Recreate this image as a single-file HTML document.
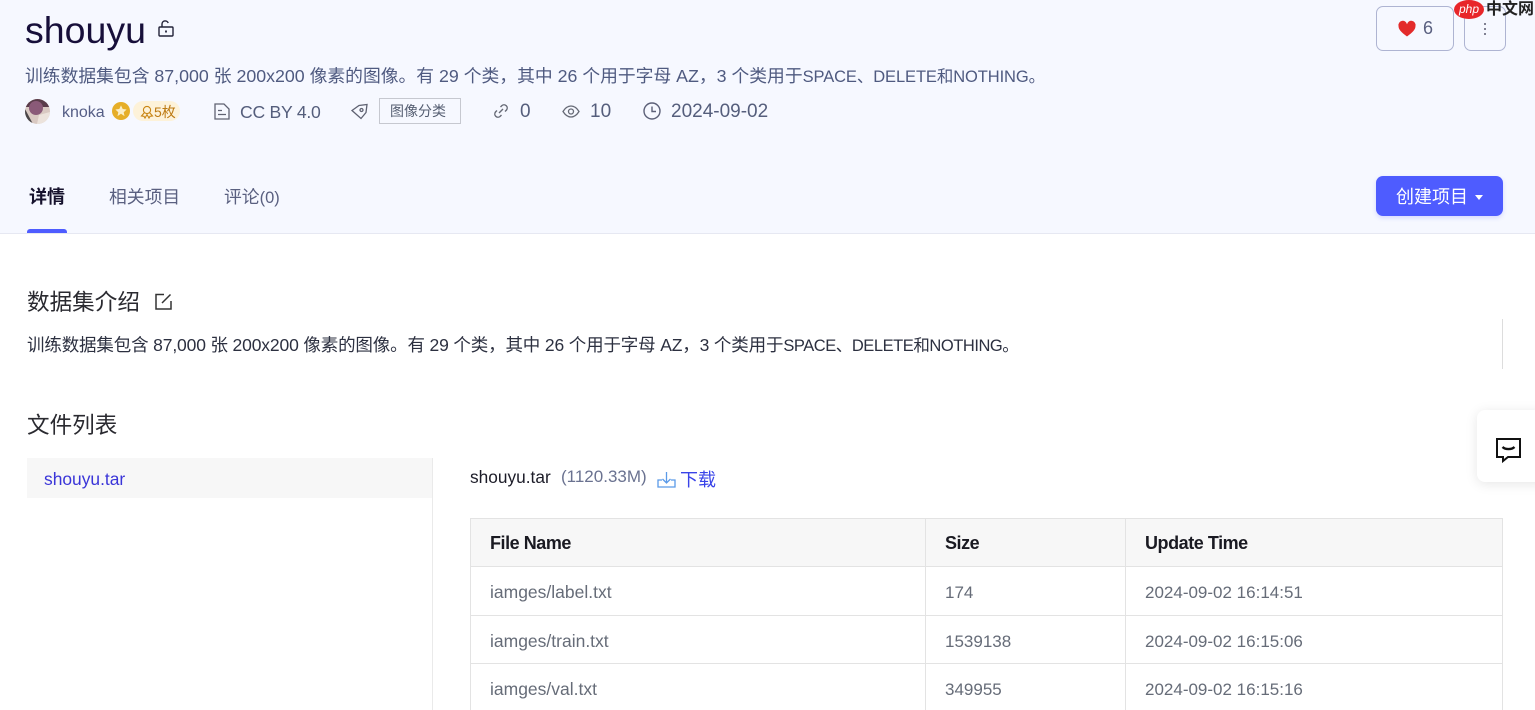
<!DOCTYPE html>
<html lang="zh"><head><meta charset="utf-8"><title>shouyu</title>
<style>
html,body{margin:0;padding:0;width:1535px;height:710px;overflow:hidden;background:#fff}
body{position:relative;font-family:"Liberation Sans","Noto Sans CJK SC",sans-serif;font-size:16px;color:#555666}
.t{position:absolute;white-space:nowrap;line-height:24px}
.a{position:absolute}
svg{position:absolute;overflow:visible}
.l{position:absolute;background:#e3e3e3}
.n{font-size:17.5px;color:#666c78}
.h{font-size:18px;font-weight:bold;letter-spacing:-.45px;color:#1a1a22}
</style></head><body>
<div class="a" style="left:0;top:0;width:1535px;height:233px;background:#f6f8ff"></div>
<div class="a" style="left:0;top:233px;width:1535px;height:1px;background:#e6e8f2"></div>

<div class="t" style="left:25px;top:8px;font-size:37.5px;line-height:44px;color:#170f3a">shouyu</div>
<svg style="left:158px;top:20px" width="16" height="17" viewBox="0 0 16 17" fill="none" stroke="#222238" stroke-width="1.4"><rect x="1" y="7" width="14" height="9" rx="1"/><path d="M4 7V4a3.200 3.200 0 0 1 6.200-1"/><path d="M8 10.500v2" stroke-width="1.800"/></svg>

<div class="t" style="left:25px;top:64px;font-size:17.8px;color:#4f5a80">训练数据集包含 87,000 张 200x200 像素的图像。有 29 个类，其中 26 个用于字母 AZ，3 个类用于<span style="font-size:16.5px;letter-spacing:-.1px">SPACE、DELETE和NOTHING。</span></div>

<svg style="left:25px;top:99px" width="25" height="25" viewBox="0 0 25 25"><defs><clipPath id="c"><circle cx="12.5" cy="12.5" r="12.5"/></clipPath></defs><g clip-path="url(#c)"><rect width="25" height="25" fill="#d9c9c2"/><rect width="25" height="8" fill="#5a3c4a"/><circle cx="11" cy="9" r="7" fill="#8a5a78"/><path d="M0 10l8 15H0z" fill="#4a4648"/><path d="M14 16l11-3v12H12z" fill="#ece3dc"/></g></svg>
<div class="t" style="left:62px;top:101px;font-size:16px;color:#555e86">knoka</div>
<svg style="left:112px;top:102px" width="18" height="18" viewBox="0 0 18 18"><circle cx="9" cy="9" r="9" fill="#e6ae28"/><path d="M9 3.400l1.700 3.600 3.900.5-2.900 2.700.8 3.900L9 11.700l-3.500 2.400.8-3.900-2.900-2.700 3.900-.5z" fill="#fbeec6"/></svg>
<div class="a" style="left:133px;top:101px;width:47px;height:20px;border-radius:10px;background:#fdf2d9"></div>
<svg style="left:140px;top:105px" width="14" height="14" viewBox="0 0 14 14" fill="none" stroke="#c98512" stroke-width="1.1"><circle cx="7" cy="5" r="3.600"/><path d="M4.400 7.600L1.500 11l2.500.3 1 1.700 2-3.400 2 3.400 1-1.700 2.500-.3-2.900-3.400"/></svg>
<div class="t" style="left:154px;top:100px;font-size:14px;color:#bd7a12">5枚</div>

<svg style="left:214px;top:103px" width="16" height="17" viewBox="0 0 16 17" fill="none" stroke="#5f6272" stroke-width="1.3"><path d="M1 1h9l5 5v10H1z"/><path d="M4 7.500h4M4 11.500h8"/></svg>
<div class="t" style="left:240px;top:100px;font-size:17.6px;letter-spacing:-.25px;color:#555e7c">CC BY 4.0</div>
<svg style="left:351px;top:103px" width="17" height="17" viewBox="0 0 17 17" fill="none" stroke="#5f6272" stroke-width="1.3"><path d="M1 7.500L8 2.500l8-1-1 8-5 6z"/><circle cx="10.500" cy="7" r="1.500"/></svg>
<div class="a" style="left:379px;top:98px;width:80px;height:24px;border:1px solid #c6c8d0"></div>
<div class="t" style="left:390px;top:99px;font-size:14px;color:#555e72">图像分类</div>
<svg style="left:493px;top:103px" width="16" height="16" viewBox="0 0 16 16" fill="none" stroke="#666a76" stroke-width="1.4"><path d="M6 10l4-4"/><path d="M7.500 4l1.500-1.500a3.200 3.200 0 0 1 4.500 4.500L12 8.500"/><path d="M8.500 12l-1.500 1.500a3.200 3.200 0 0 1-4.500-4.500L4 7.500"/></svg>
<div class="t" style="left:520px;top:100px;font-size:19px;color:#555e7c">0</div>
<svg style="left:562px;top:105px" width="18" height="13" viewBox="0 0 18 13" fill="none" stroke="#666a76" stroke-width="1.3"><path d="M1 6.500C3.500 2.500 6 1 9 1s5.500 1.500 8 5.500C14.500 10.500 12 12 9 12S3.500 10.500 1 6.500z"/><circle cx="9" cy="6.500" r="2.500"/></svg>
<div class="t" style="left:590px;top:100px;font-size:19px;color:#555e7c">10</div>
<svg style="left:643px;top:102px" width="18" height="18" viewBox="0 0 18 18" fill="none" stroke="#5c6078" stroke-width="1.4"><circle cx="9" cy="9" r="8"/><path d="M9 4.500V9.500h4"/></svg>
<div class="t" style="left:671px;top:100px;font-size:19px;color:#555e7c">2024-09-02</div>

<div class="a" style="left:1376px;top:6px;width:76px;height:43px;border:1px solid #aeb4d2;border-radius:7px"></div>
<svg style="left:1398px;top:21px" width="18" height="16" viewBox="0 0 18 16"><path d="M9 15.500C3 11 .5 8.500.5 5A4.300 4.300 0 0 1 9 3.300 4.300 4.300 0 0 1 17.500 5C17.500 8.500 15 11 9 15.500z" fill="#e32b2b"/></svg>
<div class="t" style="left:1423px;top:16px;font-size:18px;color:#5a6080">6</div>
<div class="a" style="left:1464px;top:6px;width:40px;height:43px;border:1px solid #aeb4d2;border-radius:7px"></div>
<svg style="left:1483px;top:22px" width="4" height="14" viewBox="0 0 4 14" fill="#5a5c70"><circle cx="2" cy="2" r="1"/><circle cx="2" cy="7" r="1"/><circle cx="2" cy="12" r="1"/></svg>
<div class="a" style="left:1454px;top:0;width:30px;height:19px;border-radius:50%;background:#e8262a;color:#fff;font-size:12px;line-height:18px;text-align:center;font-style:italic">php</div>
<div class="t" style="left:1486px;top:-2px;font-size:16px;color:#222;font-weight:bold">中文网</div>

<div class="t" style="left:29px;top:185px;font-size:18px;font-weight:bold;color:#17132e">详情</div>
<div class="t" style="left:109px;top:185px;font-size:17.8px;color:#5a6080">相关项目</div>
<div class="t" style="left:224px;top:185px;font-size:17.8px;color:#5a6080">评论<span style="font-size:16.5px">(0)</span></div>
<div class="a" style="left:27px;top:229px;width:40px;height:4px;background:#4e5cff;border-radius:3px 3px 0 0"></div>

<div class="a" style="left:1376px;top:176px;width:127px;height:40px;border-radius:7px;background:#4e5cff;box-shadow:0 2px 5px rgba(78,92,255,.2)"></div>
<div class="t" style="left:1396px;top:185px;font-size:18px;color:#fff">创建项目</div>
<svg style="left:1475px;top:195px" width="8" height="5" viewBox="0 0 8 5"><path d="M0 0h8L4 5z" fill="#fff"/></svg>

<div class="t" style="left:27px;top:291px;font-size:22.6px;color:#2a2a30">数据集介绍</div>
<svg style="left:155px;top:293px" width="17" height="17" viewBox="0 0 17 17" fill="none" stroke="#333" stroke-width="1.5"><path d="M9 1.500H1v14.500h15V8"/><path d="M15.500 1.500L7 10"/></svg>
<div class="t" style="left:27px;top:333px;font-size:17.5px;letter-spacing:-.15px;color:#2c3040">训练数据集包含 87,000 张 200x200 像素的图像。有 29 个类，其中 26 个用于字母 AZ，3 个类用于<span style="font-size:16.5px;letter-spacing:-.45px">SPACE、DELETE和NOTHING。</span></div>
<div class="a" style="left:1502px;top:319px;width:1px;height:50px;background:#ddd"></div>

<div class="t" style="left:27px;top:414px;font-size:22.6px;color:#2a2a30">文件列表</div>
<div class="a" style="left:27px;top:458px;width:405px;height:40px;background:#f7f7f7"></div>
<div class="t" style="left:44px;top:467px;font-size:17.4px;color:#3a35d8">shouyu.tar</div>
<div class="l" style="left:432px;top:458px;width:1px;height:252px;background:#eaeaea"></div>

<div class="t" style="left:470px;top:465px;font-size:17.3px;color:#1c1c28">shouyu.tar</div>
<div class="t" style="left:561px;top:465px;font-size:17px;color:#6a7290">(1120.33M)</div>
<svg style="left:657px;top:471px" width="19" height="17" viewBox="0 0 19 17" fill="none" stroke="#5b9ae8" stroke-width="1.3"><path d="M5 9H1v7h17V9h-4"/><path d="M9.500 1v11M5.500 8l4 4 4-4"/></svg>
<div class="t" style="left:680px;top:468px;font-size:18px;color:#3a44e8">下载</div>

<div class="a" style="left:470px;top:518px;width:1033px;height:49px;background:#f7f7f7"></div>
<div class="l" style="left:470px;top:518px;width:1033px;height:1px"></div>
<div class="l" style="left:470px;top:566px;width:1033px;height:1px"></div>
<div class="l" style="left:470px;top:615px;width:1033px;height:1px"></div>
<div class="l" style="left:470px;top:663px;width:1033px;height:1px"></div>
<div class="l" style="left:470px;top:518px;width:1px;height:192px"></div>
<div class="l" style="left:925px;top:518px;width:1px;height:192px"></div>
<div class="l" style="left:1125px;top:518px;width:1px;height:192px"></div>
<div class="l" style="left:1502px;top:518px;width:1px;height:192px"></div>

<div class="t h" style="left:490px;top:531px">File Name</div>
<div class="t h" style="left:945px;top:531px">Size</div>
<div class="t h" style="left:1145px;top:531px">Update Time</div>

<div class="t n" style="left:490px;top:580px">iamges/label.txt</div>
<div class="t n" style="left:945px;top:581px;font-size:17px">174</div>
<div class="t n" style="left:1145px;top:581px;font-size:17px">2024-09-02 16:14:51</div>
<div class="t n" style="left:490px;top:629px">iamges/train.txt</div>
<div class="t n" style="left:945px;top:630px;font-size:17px">1539138</div>
<div class="t n" style="left:1145px;top:630px;font-size:17px">2024-09-02 16:15:06</div>
<div class="t n" style="left:490px;top:677px">iamges/val.txt</div>
<div class="t n" style="left:945px;top:678px;font-size:17px">349955</div>
<div class="t n" style="left:1145px;top:678px;font-size:17px">2024-09-02 16:15:16</div>

<div class="a" style="left:1477px;top:410px;width:70px;height:72px;background:#fff;border-radius:8px;box-shadow:0 2px 12px rgba(0,0,0,.1)"></div>
<svg style="left:1495px;top:437px" width="27" height="26" viewBox="0 0 27 26" fill="none" stroke="#111" stroke-width="2"><path d="M2 2h23v18H13l-5 4v-4H2z"/><path d="M7.500 10c3 2.800 9 2.800 12 0" stroke-width="2.400"/></svg>
</body></html>
